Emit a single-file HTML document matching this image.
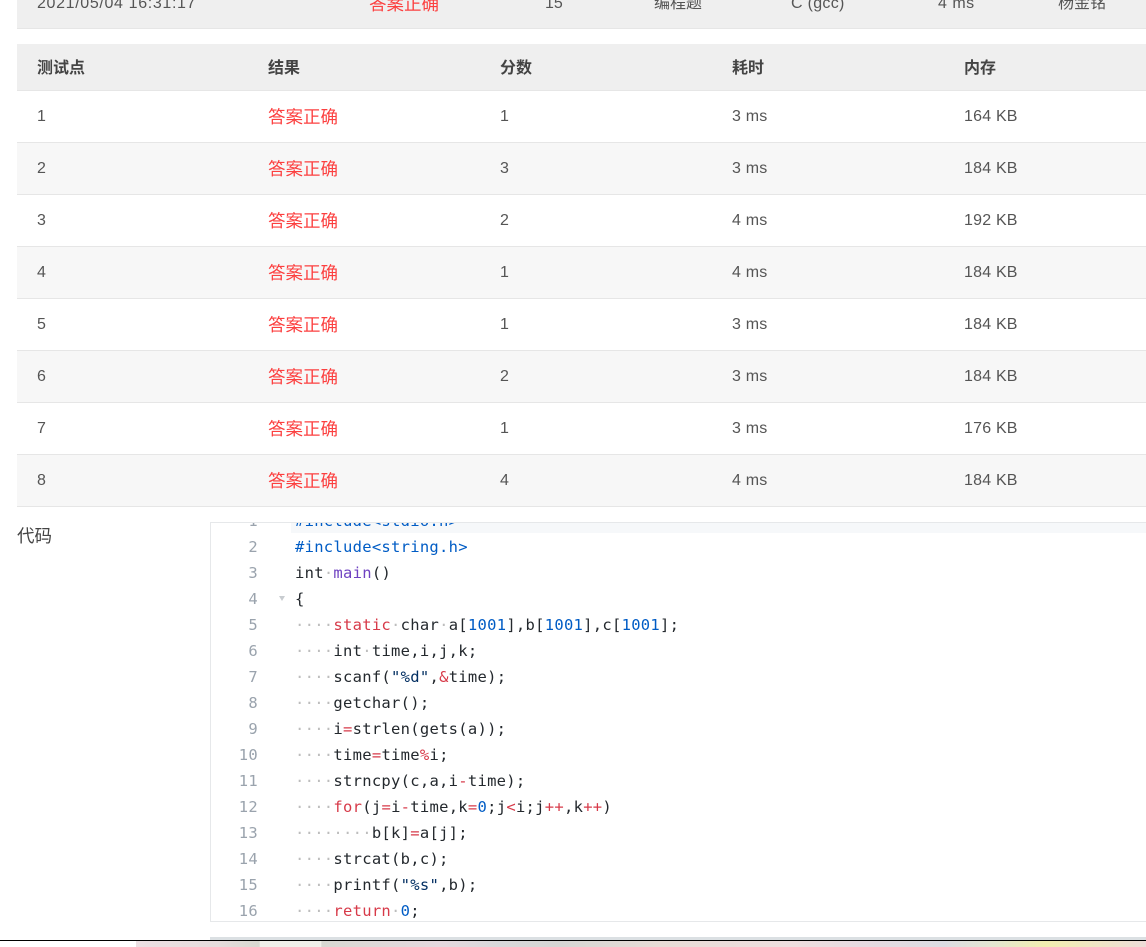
<!DOCTYPE html>
<html lang="zh">
<head>
<meta charset="utf-8">
<style>
html,body{margin:0;padding:0;background:#fff;}
body{position:relative;width:1146px;height:947px;overflow:hidden;font-family:"Liberation Sans","Noto Sans CJK SC",sans-serif;font-size:16px;color:#555;}
.a{position:absolute;white-space:nowrap;}
.bar{position:absolute;left:17px;width:1129px;box-sizing:border-box;}
.row{height:52px;border-bottom:1px solid #e6e6e6;}
.t{position:absolute;white-space:nowrap;line-height:24px;}
.row .t{top:14px;letter-spacing:.2px;}
.r{color:#fc3f3f;font-size:17.5px;}
.row .r{letter-spacing:0;}
.th{font-weight:bold;color:#444;font-size:16px;}
.top{top:-8px;}
#code{position:absolute;left:210px;top:522px;width:936px;height:400px;box-sizing:border-box;border:1px solid #e6e8ea;border-right:none;overflow:hidden;background:#fff;}
.l{position:absolute;left:84px;height:26px;line-height:26px;white-space:pre;font-family:"DejaVu Sans Mono",monospace;font-size:15.5px;letter-spacing:.27px;color:#24292e;}
.n{position:absolute;left:0;width:47px;text-align:right;height:26px;line-height:26px;font-family:"DejaVu Sans Mono",monospace;font-size:15.5px;letter-spacing:.27px;color:#9aa3ad;}
.w{color:#bdbdbd}.k{color:#d73a49}.f{color:#6f42c1}.m{color:#005cc5}.s{color:#032f62}
</style>
</head>
<body>
<div class="bar" style="top:0;height:29px;background:#efefef;border-bottom:1px solid #e6e6e6;"></div>
<div class="t top" style="left:37px;letter-spacing:.65px;">2021/05/04 16:31:17</div>
<div class="t r top" style="left:369px;">答案正确</div>
<div class="t top" style="left:545px;">15</div>
<div class="t top" style="left:654px;">编程题</div>
<div class="t top" style="left:791px;letter-spacing:.3px;">C (gcc)</div>
<div class="t top" style="left:938px;letter-spacing:.5px;">4 ms</div>
<div class="t top" style="left:1058px;">杨金铭</div>

<div class="bar" style="top:44px;height:47px;background:#efefef;border-bottom:1px solid #e6e6e6;"></div>
<div class="t th" style="left:37px;top:57px;">测试点</div>
<div class="t th" style="left:268px;top:57px;">结果</div>
<div class="t th" style="left:500px;top:57px;">分数</div>
<div class="t th" style="left:732px;top:57px;">耗时</div>
<div class="t th" style="left:964px;top:57px;">内存</div>

<div class="bar row" style="top:91px;background:#fff;"><div class="t" style="left:20px">1</div><div class="t r" style="left:251px">答案正确</div><div class="t" style="left:483px">1</div><div class="t" style="left:715px">3 ms</div><div class="t" style="left:947px">164 KB</div></div>
<div class="bar row" style="top:143px;background:#f7f7f7;"><div class="t" style="left:20px">2</div><div class="t r" style="left:251px">答案正确</div><div class="t" style="left:483px">3</div><div class="t" style="left:715px">3 ms</div><div class="t" style="left:947px">184 KB</div></div>
<div class="bar row" style="top:195px;background:#fff;"><div class="t" style="left:20px">3</div><div class="t r" style="left:251px">答案正确</div><div class="t" style="left:483px">2</div><div class="t" style="left:715px">4 ms</div><div class="t" style="left:947px">192 KB</div></div>
<div class="bar row" style="top:247px;background:#f7f7f7;"><div class="t" style="left:20px">4</div><div class="t r" style="left:251px">答案正确</div><div class="t" style="left:483px">1</div><div class="t" style="left:715px">4 ms</div><div class="t" style="left:947px">184 KB</div></div>
<div class="bar row" style="top:299px;background:#fff;"><div class="t" style="left:20px">5</div><div class="t r" style="left:251px">答案正确</div><div class="t" style="left:483px">1</div><div class="t" style="left:715px">3 ms</div><div class="t" style="left:947px">184 KB</div></div>
<div class="bar row" style="top:351px;background:#f7f7f7;"><div class="t" style="left:20px">6</div><div class="t r" style="left:251px">答案正确</div><div class="t" style="left:483px">2</div><div class="t" style="left:715px">3 ms</div><div class="t" style="left:947px">184 KB</div></div>
<div class="bar row" style="top:403px;background:#fff;"><div class="t" style="left:20px">7</div><div class="t r" style="left:251px">答案正确</div><div class="t" style="left:483px">1</div><div class="t" style="left:715px">3 ms</div><div class="t" style="left:947px">176 KB</div></div>
<div class="bar row" style="top:455px;background:#f7f7f7;"><div class="t" style="left:20px">8</div><div class="t r" style="left:251px">答案正确</div><div class="t" style="left:483px">4</div><div class="t" style="left:715px">4 ms</div><div class="t" style="left:947px">184 KB</div></div>

<div class="t" style="left:17px;top:524px;color:#444;font-size:17.5px;">代码</div>

<div id="code">
<div style="position:absolute;left:80px;top:0;width:860px;height:10px;background:#f6f8fa;"></div>
<div class="n" style="top:-15px">1</div><div class="l m" style="top:-15px">#include&lt;stdio.h&gt;</div>
<div class="n" style="top:11px">2</div><div class="l m" style="top:11px">#include&lt;string.h&gt;</div>
<div class="n" style="top:37px">3</div><div class="l" style="top:37px">int<span class="w">·</span><span class="f">main</span>()</div>
<div class="n" style="top:63px">4</div><div style="position:absolute;left:68px;top:73px;width:0;height:0;border-left:3.5px solid transparent;border-right:3.5px solid transparent;border-top:5px solid #c8ccd0;"></div><div class="l" style="top:63px">{</div>
<div class="n" style="top:89px">5</div><div class="l" style="top:89px"><span class="w">····</span><span class="k">static</span><span class="w">·</span>char<span class="w">·</span>a[<span class="m">1001</span>],b[<span class="m">1001</span>],c[<span class="m">1001</span>];</div>
<div class="n" style="top:115px">6</div><div class="l" style="top:115px"><span class="w">····</span>int<span class="w">·</span>time,i,j,k;</div>
<div class="n" style="top:141px">7</div><div class="l" style="top:141px"><span class="w">····</span>scanf(<span class="s">"%d"</span>,<span class="k">&amp;</span>time);</div>
<div class="n" style="top:167px">8</div><div class="l" style="top:167px"><span class="w">····</span>getchar();</div>
<div class="n" style="top:193px">9</div><div class="l" style="top:193px"><span class="w">····</span>i<span class="k">=</span>strlen(gets(a));</div>
<div class="n" style="top:219px">10</div><div class="l" style="top:219px"><span class="w">····</span>time<span class="k">=</span>time<span class="k">%</span>i;</div>
<div class="n" style="top:245px">11</div><div class="l" style="top:245px"><span class="w">····</span>strncpy(c,a,i<span class="k">-</span>time);</div>
<div class="n" style="top:271px">12</div><div class="l" style="top:271px"><span class="w">····</span><span class="k">for</span>(j<span class="k">=</span>i<span class="k">-</span>time,k<span class="k">=</span><span class="m">0</span>;j<span class="k">&lt;</span>i;j<span class="k">++</span>,k<span class="k">++</span>)</div>
<div class="n" style="top:297px">13</div><div class="l" style="top:297px"><span class="w">········</span>b[k]<span class="k">=</span>a[j];</div>
<div class="n" style="top:323px">14</div><div class="l" style="top:323px"><span class="w">····</span>strcat(b,c);</div>
<div class="n" style="top:349px">15</div><div class="l" style="top:349px"><span class="w">····</span>printf(<span class="s">"%s"</span>,b);</div>
<div class="n" style="top:375px">16</div><div class="l" style="top:375px"><span class="w">····</span><span class="k">return</span><span class="w">·</span><span class="m">0</span>;</div>
</div>

<div class="a" style="left:210px;top:937px;width:936px;height:3px;background:#dbe0e3;"></div>
<div class="a" style="left:136px;top:941px;width:1010px;height:6px;background:linear-gradient(90deg,#ecdfe2 0,#e6dcdc 8%,#d8d8d0 12.2%,#f0f0ea 12.3%,#f0f0ea 18.3%,#d8d8d2 18.4%,#e5d8de 30%,#d8d8da 36%,#d6d6d4 42%,#e8dcd6 52%,#eeddde 65%,#e6dae0 72%,#dcdce2 80%,#e4e6d0 85%,#f2eeb0 90%,#f0e8c0 94%,#eedcd8 100%);"></div>
<div class="a" style="left:0;top:940px;width:1146px;height:1px;background:#000;"></div>
</body>
</html>
